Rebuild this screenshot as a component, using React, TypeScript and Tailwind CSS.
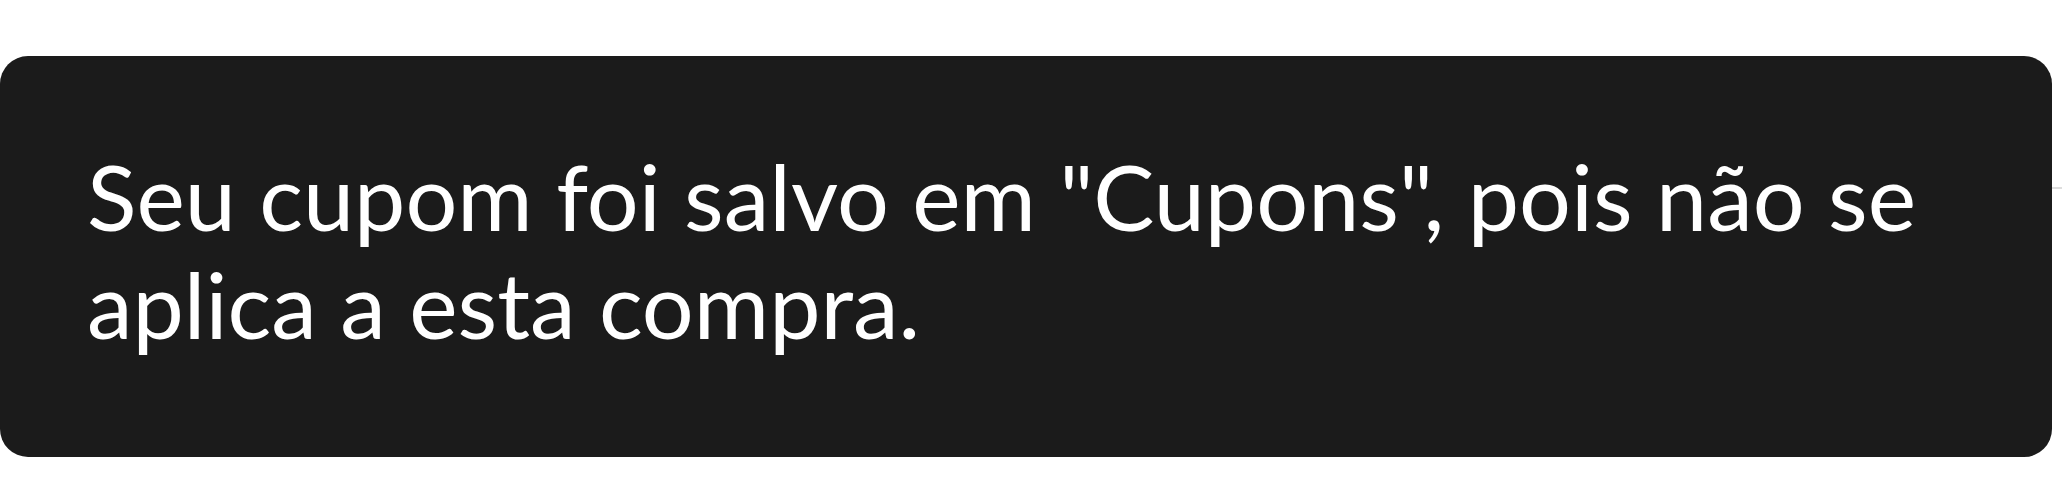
export default function App() {
  return (
    <div className="flex items-start bg-white h-[500px] pt-[56px]">
      <div className="w-[2052px] h-[401px] shrink-0 rounded-[28px] bg-[#1b1b1b] pl-[87px] pr-[80px] pt-[86px]">
        <p className="font-['Lato',sans-serif] text-[91.6px] leading-[108px] text-white">
          Seu cupom foi salvo em "Cupons", pois não se aplica a esta compra.
        </p>
      </div>
      <div className="mt-[131px] h-[2px] flex-1 bg-[#dedede]" />
    </div>
  );
}
